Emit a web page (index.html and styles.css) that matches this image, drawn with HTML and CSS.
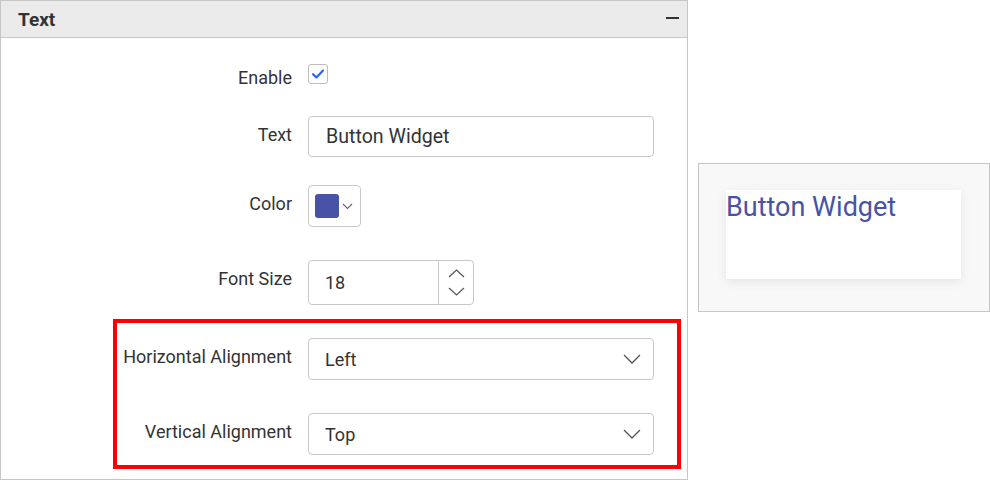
FILE: index.html
```html
<!DOCTYPE html>
<html lang="en">
<head>
<meta charset="utf-8">
<title>Text properties</title>
<link rel="stylesheet" href="styles.css">
</head>
<body>
<div class="page">
  <section class="panel">
    <header class="panel-head">
      <h2 class="panel-title">Text</h2>
      <span class="collapse" aria-label="Collapse"></span>
    </header>
    <div class="panel-body">
      <div class="row row-enable">
        <label class="label">Enable</label>
        <span class="checkbox">
          <svg width="14" height="12" viewBox="0 0 14 12"><path d="M2 6.2 L5.4 9.4 L12 2.6" fill="none" stroke="#2b63f3" stroke-width="2.2" stroke-linecap="round" stroke-linejoin="round"/></svg>
        </span>
      </div>
      <div class="row row-text">
        <label class="label">Text</label>
        <div class="field field-text">Button Widget</div>
      </div>
      <div class="row row-color">
        <label class="label">Color</label>
        <div class="field field-color">
          <span class="swatch"></span>
          <svg class="chev-small" width="11" height="7" viewBox="0 0 11 7"><path d="M1 1 L5.5 5.5 L10 1" fill="none" stroke="#666" stroke-width="1.1"/></svg>
        </div>
      </div>
      <div class="row row-font">
        <label class="label">Font Size</label>
        <div class="field field-num">
          <span class="num-value">18</span>
          <span class="spin">
            <svg width="17" height="9" viewBox="0 0 17 9"><path d="M1 8 L8.5 1 L16 8" fill="none" stroke="#555" stroke-width="1.2"/></svg>
            <svg width="17" height="9" viewBox="0 0 17 9"><path d="M1 1 L8.5 8 L16 1" fill="none" stroke="#555" stroke-width="1.2"/></svg>
          </span>
        </div>
      </div>
      <div class="row row-select">
        <label class="label">Horizontal Alignment</label>
        <div class="field field-select">
          <span>Left</span>
          <svg width="18" height="10" viewBox="0 0 18 10"><path d="M1 1 L9 9 L17 1" fill="none" stroke="#555" stroke-width="1.3"/></svg>
        </div>
      </div>
      <div class="row row-select">
        <label class="label">Vertical Alignment</label>
        <div class="field field-select">
          <span>Top</span>
          <svg width="18" height="10" viewBox="0 0 18 10"><path d="M1 1 L9 9 L17 1" fill="none" stroke="#555" stroke-width="1.3"/></svg>
        </div>
      </div>
    </div>
    <div class="highlight"></div>
  </section>
  <aside class="preview">
    <div class="card"><span class="card-text">Button Widget</span></div>
  </aside>
</div>
</body>
</html>
```

FILE: styles.css
```css
* { box-sizing: border-box; }
html, body { margin: 0; padding: 0; background: #fff; }
body {
  font-family: Roboto, "Liberation Sans", sans-serif;
  color: #333;
  width: 990px;
  height: 480px;
  overflow: hidden;
}
.page {
  display: flex;
  align-items: flex-start;
  gap: 10px;
}
.panel {
  position: relative;
  width: 688px;
  height: 480px;
  border: 1px solid #c6c6c6;
  flex: none;
}
.panel-head {
  height: 37px;
  background: #ebebeb;
  border-bottom: 1px solid #c6c6c6;
  display: flex;
  align-items: center;
  justify-content: space-between;
  padding: 0 8px 0 17px;
}
.panel-title {
  margin: 0;
  font-size: 19px;
  font-weight: 700;
  color: #333;
  line-height: 1;
}
.collapse {
  width: 13px;
  height: 2px;
  background: #333;
  margin-top: -2px;
}
.panel-body {
  display: flex;
  flex-direction: column;
  padding-top: 26px;
}
.row {
  display: flex;
  align-items: flex-start;
  gap: 16px;
}
.label {
  width: 291px;
  flex: none;
  text-align: right;
  font-size: 18px;
  line-height: 20px;
  padding-top: 9px;
  color: #333;
}
.row-enable { height: 20px; }
.row-enable .label { padding-top: 4px; }
.row-text { margin-top: 32px; }
.row-color { margin-top: 28px; }
.row-font { margin-top: 33px; }
.row-select { margin-top: 33px; }

.checkbox {
  width: 20px;
  height: 20px;
  border: 1px solid #bdbdbd;
  border-radius: 3px;
  display: flex;
  align-items: center;
  justify-content: center;
}
.field {
  border: 1px solid #c8c8c8;
  border-radius: 4px;
  background: #fff;
  display: flex;
  align-items: center;
}
.field-text {
  width: 346px;
  height: 41px;
  padding-left: 17px;
  font-size: 19.6px;
  color: #333;
}
.field-color {
  width: 53px;
  height: 42px;
  padding-left: 6px;
  gap: 3px;
}
.swatch {
  width: 24px;
  height: 24px;
  border-radius: 3px;
  background: #4953a5;
}
.chev-small { margin-top: 1px; }
.field-num {
  width: 166px;
  height: 45px;
  justify-content: space-between;
}
.num-value {
  padding-left: 16px;
  font-size: 18px;
}
.spin {
  width: 35px;
  height: 100%;
  border-left: 1px solid #c8c8c8;
  display: flex;
  flex-direction: column;
  align-items: center;
  justify-content: center;
  gap: 9px;
}
.field-select {
  width: 346px;
  height: 42px;
  padding: 0 12px 0 16px;
  justify-content: space-between;
  font-size: 18px;
}
.highlight {
  position: absolute;
  left: 112px;
  top: 318px;
  width: 568px;
  height: 150px;
  border: 4px solid #ff0000;
  pointer-events: none;
}
.preview {
  margin-top: 163px;
  width: 292px;
  height: 149px;
  background: #f8f8f8;
  border: 1px solid #c6c6c6;
  padding: 26px 0 0 27px;
  flex: none;
}
.card {
  width: 235px;
  height: 89px;
  background: #fff;
  box-shadow: 0 3px 10px rgba(0, 0, 0, 0.08);
}
.card-text {
  display: block;
  font-size: 27px;
  line-height: 32px;
  padding-top: 1px;
  color: #4953a5;
}
```
